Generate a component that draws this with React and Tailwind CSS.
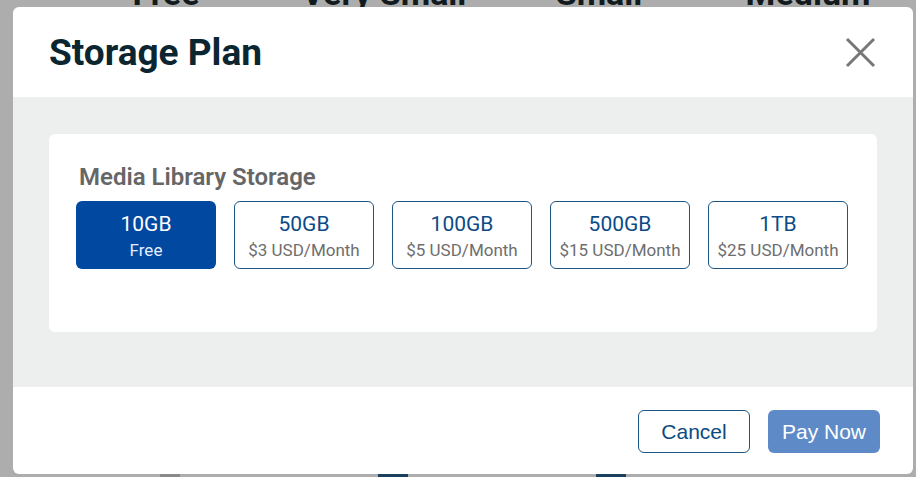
import React from "react";

const plans = [
  { size: "10GB", price: "Free", selected: true },
  { size: "50GB", price: "$3 USD/Month" },
  { size: "100GB", price: "$5 USD/Month" },
  { size: "500GB", price: "$15 USD/Month" },
  { size: "1TB", price: "$25 USD/Month" },
];

export default function App() {
  return (
    <div className="relative w-[916px] h-[477px] overflow-hidden bg-[#adadad] font-['Roboto',sans-serif]">
      {/* background content behind overlay */}
      <div className="absolute left-[57px] top-[-26px] flex text-[34px] font-bold text-[#111a1c] leading-[38px]">
        <div className="w-[218px] text-center">Free</div>
        <div className="w-[218px] text-center">Very Small</div>
        <div className="w-[212px] text-center">Small</div>
        <div className="w-[206px] text-center">Medium</div>
      </div>
      <div className="absolute left-[160px] top-[473px] w-[20px] h-[6px] bg-[#8a8a8a]" />
      <div className="absolute left-[378px] top-[473px] w-[30px] h-[6px] bg-[#1b3f5e]" />
      <div className="absolute left-[596px] top-[473px] w-[30px] h-[6px] bg-[#1b3f5e]" />

      {/* modal */}
      <div className="absolute left-[13px] top-[7px] w-[900px] h-[467px] rounded-[6px] bg-white overflow-hidden flex flex-col">
        <div className="h-[90px] shrink-0 flex items-center justify-between pl-[36px] pr-[37px]">
          <h1 className="text-[37px] font-bold text-[#0b2630] leading-none">Storage Plan</h1>
          <button className="w-[31px] h-[31px] flex items-center justify-center">
            <svg width="31" height="31" viewBox="0 0 31 31" fill="none">
              <path d="M2 2 L29 29 M29 2 L2 29" stroke="#777777" strokeWidth="3" />
            </svg>
          </button>
        </div>
        <div className="h-[290px] shrink-0 bg-[#edeeee] px-[36px] pt-[37px]">
          <div className="h-[198px] rounded-[6px] bg-white px-[27px] pt-[27px]">
            <div className="pl-[3px] text-[24px] font-semibold text-[#666666] leading-[32px]">
              Media Library Storage
            </div>
            <div className="mt-[8px] flex gap-[18px]">
              {plans.map((p) => (
                <div
                  key={p.size}
                  className={
                    p.selected
                      ? "w-[140px] h-[68px] pt-[3px] rounded-[6px] bg-[#0048a0] flex flex-col items-center justify-center"
                      : "w-[140px] h-[68px] pt-[3px] rounded-[6px] border border-[#1d5585] bg-white flex flex-col items-center justify-center"
                  }
                >
                  <div
                    className={
                      p.selected
                        ? "text-[21px] leading-[25px] text-white"
                        : "text-[21px] leading-[25px] text-[#0c4b87]"
                    }
                  >
                    {p.size}
                  </div>
                  <div
                    className={
                      p.selected
                        ? "mt-[2px] text-[17px] leading-[22px] text-[#e4eeff]"
                        : "mt-[2px] text-[17px] leading-[22px] text-[#6e6e6e]"
                    }
                  >
                    {p.price}
                  </div>
                </div>
              ))}
            </div>
          </div>
        </div>
        <div className="flex-1 flex items-start justify-end gap-[18px] pr-[33px] pt-[23px] font-['Liberation_Sans',Arial,sans-serif]">
          <button className="w-[112px] h-[43px] rounded-[6px] border border-[#1d5585] bg-white text-[21px] text-[#0c4b80]">
            Cancel
          </button>
          <button className="w-[112px] h-[43px] rounded-[6px] bg-[#5e8bc7] text-[21px] text-white">
            Pay Now
          </button>
        </div>
      </div>
    </div>
  );
}
